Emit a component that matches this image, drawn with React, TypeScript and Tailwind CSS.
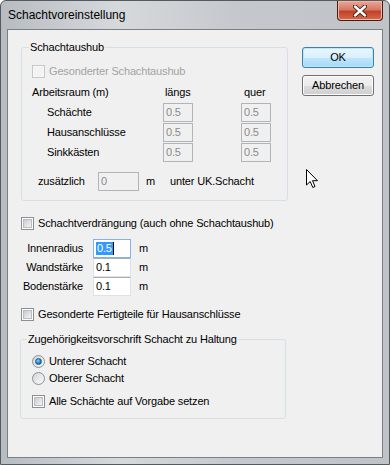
import React from "react";

const Check = ({ disabled }: { disabled?: boolean }) => (
  <span
    className={`flex h-[13px] w-[13px] shrink-0 items-center justify-center border ${
      disabled ? "border-[#c7c7c7] bg-[#f7f7f7]" : "border-[#8e8f8f] bg-white"
    }`}
  >
    <span
      className={`block h-[9px] w-[9px] ${
        disabled
          ? "bg-[#f3f3f3]"
          : "border border-[#b9bcc0] bg-[linear-gradient(135deg,#c9ccd1,#f4f4f5)]"
      }`}
    />
  </span>
);

const Radio = ({ on }: { on?: boolean }) => (
  <span className="flex h-[13px] w-[13px] shrink-0 items-center justify-center rounded-full border border-[#8e8f8f] bg-[linear-gradient(135deg,#d3d5d9,#fbfbfb)]">
    {on && (
      <span className="block h-[7px] w-[7px] rounded-full border border-[#1d5a86] bg-[radial-gradient(circle_at_40%_35%,#8fd0ff,#1f7bc2_60%,#0f4d80)]" />
    )}
  </span>
);

const Box = ({
  value,
  w,
  disabled,
}: {
  value: string;
  w: string;
  disabled?: boolean;
}) => (
  <div
    className={`flex h-[19px] ${w} items-center border pl-[2px] ${
      disabled
        ? "border-[#b1b5b9] bg-[#f0f0f0] text-[#8a8a8a]"
        : "border-[#dde2e8] border-t-[#abadb3] bg-white text-black"
    }`}
  >
    {value}
  </div>
);

const Btn = ({ label, def }: { label: string; def?: boolean }) => (
  <button
    className={`flex h-[21px] w-[72px] items-center justify-center rounded-[3px] border text-black ${
      def
        ? "border-[#3c7fb1] bg-[linear-gradient(#eaf6fd_0%,#d9f0fc_50%,#bee6fd_51%,#a7d9f5_100%)] shadow-[inset_0_0_0_1px_#bfe5f9]"
        : "border-[#707070] bg-[linear-gradient(#f2f2f2_0%,#ebebeb_50%,#dddddd_51%,#cfcfcf_100%)] shadow-[inset_0_0_0_1px_#fcfcfc]"
    }`}
  >
    {label}
  </button>
);

export default function App() {
  return (
    <div className="relative flex h-[465px] w-[390px] flex-col overflow-hidden rounded-t-[6px] border border-[#555a5f] bg-[linear-gradient(90deg,#b7bcc1_0%,#d6d9dc_30%,#c5c9cd_60%,#bfc3c8_100%)] font-['Liberation_Sans',Arial,sans-serif] text-[11px] tracking-[-0.15px] text-black">
      {/* title bar */}
      <div className="flex h-[28px] shrink-0 items-start justify-between">
        <span className="pl-[7px] pt-[7px] text-[12px] leading-[14px] tracking-normal text-black">
          Schachtvoreinstellung
        </span>
        <div className="mr-[6px] flex h-[20px] w-[46px] items-center justify-center rounded-b-[4px] border border-t-0 border-[#4a1a10] bg-[linear-gradient(#e9a897_0%,#d47a63_45%,#c2412a_55%,#d8694a_100%)] shadow-[inset_0_0_0_1px_#f0b7a7]">
          <svg width="14" height="12" viewBox="0 0 14 12">
            <path
              d="M2 1.5 L12 10.5 M12 1.5 L2 10.5"
              stroke="#3a1a14"
              strokeWidth="4.2"
              strokeLinecap="round"
            />
            <path
              d="M2 1.5 L12 10.5 M12 1.5 L2 10.5"
              stroke="#ffffff"
              strokeWidth="2.4"
              strokeLinecap="round"
            />
          </svg>
        </div>
      </div>

      {/* client area */}
      <div className="relative mx-[6px] mb-[6px] flex flex-1 border border-[#7b7f84] bg-[#f0f0f0] pl-[13px] pr-[8px]">
        <div className="flex w-[268px] flex-col">
          {/* Schachtaushub */}
          <fieldset className="mt-[10px] rounded-[3px] border border-[#d5dfe5] pb-[9px]">
            <legend className="ml-[7px] px-[1px] leading-[14px]">Schachtaushub</legend>
            <div className="mt-[7px] flex h-[20px] items-center gap-[4px] pl-[10px] text-[#a3a3a3]">
              <Check disabled />
              <span>Gesonderter Schachtaushub</span>
            </div>
            <div className="mt-[1px] grid h-[20px] grid-cols-[131px_30px_48px_30px] items-center pl-[10px]">
              <span>Arbeitsraum (m)</span>
              <span className="pl-[2px]">längs</span>
              <span />
              <span className="pl-[3px]">quer</span>
            </div>
            <div className="mt-[1px] flex flex-col gap-[1px] pl-[10px]">
              {["Schächte", "Hausanschlüsse", "Sinkkästen"].map((r) => (
                <div key={r} className="grid h-[19px] grid-cols-[131px_30px_48px_30px] items-center">
                  <span className="pl-[15px]">{r}</span>
                  <Box value="0.5" w="w-[30px]" disabled />
                  <span />
                  <Box value="0.5" w="w-[30px]" disabled />
                </div>
              ))}
            </div>
            <div className="mt-[10px] flex h-[19px] items-center pl-[16px]">
              <span className="w-[60px]">zusätzlich</span>
              <Box value="0" w="w-[41px]" disabled />
              <span className="ml-[7px] w-[24px]">m</span>
              <span>unter UK.Schacht</span>
            </div>
          </fieldset>

          <div className="mt-[12px] flex h-[20px] items-center gap-[4px]">
            <Check />
            <span>Schachtverdrängung (auch ohne Schachtaushub)</span>
          </div>

          <div className="mt-[6px] flex flex-col">
            {[
              ["Innenradius", "0.5"],
              ["Wandstärke", "0.1"],
              ["Bodenstärke", "0.1"],
            ].map(([l, v], i) => (
              <div key={l} className="flex h-[19px] items-center">
                <span className="w-[62px] text-right">{l}</span>
                <div
                  className={`ml-[10px] flex h-[19px] w-[38px] items-center border bg-white pl-[2px] ${
                    i === 0 ? "border-[#7eb4ea]" : "border-[#dde2e8] border-t-[#abadb3]"
                  }`}
                >
                  {i === 0 ? (
                    <>
                      <span className="bg-[#3399ff] px-[1px] leading-[13px] text-white">{v}</span>
                      <span className="h-[13px] w-px bg-black" />
                    </>
                  ) : (
                    v
                  )}
                </div>
                <span className="ml-[8px]">m</span>
              </div>
            ))}
          </div>

          <div className="mt-[8px] flex h-[20px] items-center gap-[4px]">
            <Check />
            <span>Gesonderte Fertigteile für Hausanschlüsse</span>
          </div>

          {/* Zugehörigkeit */}
          <fieldset className="-ml-px mt-[8px] w-[266px] rounded-[3px] border border-[#d5dfe5] pb-[8px]">
            <legend className="ml-[6px] px-[1px] leading-[14px]">
              Zugehörigkeitsvorschrift Schacht zu Haltung
            </legend>
            <div className="mt-[7px] flex h-[17px] items-center gap-[4px] pl-[11px]">
              <Radio on />
              <span>Unterer Schacht</span>
            </div>
            <div className="flex h-[17px] items-center gap-[4px] pl-[11px]">
              <Radio />
              <span>Oberer Schacht</span>
            </div>
            <div className="mt-[6px] flex h-[17px] items-center gap-[4px] pl-[11px]">
              <Check />
              <span>Alle Schächte auf Vorgabe setzen</span>
            </div>
          </fieldset>
        </div>

        {/* buttons */}
        <div className="ml-[14px] flex flex-col gap-[7px] pt-[17px]">
          <Btn label="OK" def />
          <Btn label="Abbrechen" />
        </div>

        {/* mouse pointer */}
        <svg
          className="absolute left-[298px] top-[139px]"
          width="13"
          height="20"
          viewBox="0 0 13 20"
        >
          <path
            d="M0.5 0.5 L0.5 16 L4.2 12.5 L6.8 18.5 L9 17.5 L6.5 11.7 L11.5 11.7 Z"
            fill="#ffffff"
            stroke="#000000"
            strokeWidth="1"
            strokeLinejoin="miter"
          />
        </svg>
      </div>
    </div>
  );
}
